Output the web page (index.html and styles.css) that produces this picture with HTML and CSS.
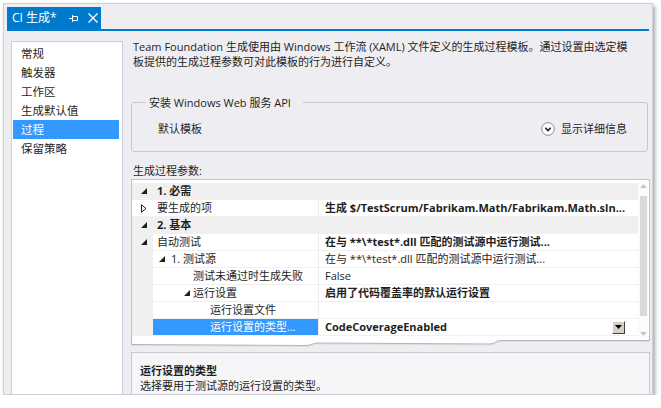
FILE: index.html
```html
<!DOCTYPE html>
<html>
<head>
<meta charset="utf-8">
<link rel="stylesheet" href="styles.css">
</head>
<body>
<div class="window">
  <div class="tabstrip">
    <div class="tab">
      <span class="tab-title">CI 生成*</span>
      <svg class="pin" width="9" height="7" viewBox="0 0 9 7"><path d="M0 3.5H3M3.5 0V7M3.5 1.5H8.5V5.5H3.5" stroke="#fff" fill="none"/></svg>
      <svg class="close" width="10" height="10" viewBox="0 0 10 10"><path d="M0.5 0.5L9.5 9.5M9.5 0.5L0.5 9.5" stroke="#fff" stroke-width="1.3" fill="none"/></svg>
    </div>
  </div>
  <div class="tabline"></div>
  <div class="main">
    <nav class="nav">
      <div class="nav-item">常规</div>
      <div class="nav-item">触发器</div>
      <div class="nav-item">工作区</div>
      <div class="nav-item">生成默认值</div>
      <div class="nav-item selected">过程</div>
      <div class="nav-item">保留策略</div>
    </nav>
    <section class="content">
      <p class="intro">Team Foundation 生成使用由 Windows 工作流 (XAML) 文件定义的生成过程模板。通过设置由选定模<br>板提供的生成过程参数可对此模板的行为进行自定义。</p>
      <fieldset class="group">
        <legend class="group-legend">安装 Windows Web 服务 API</legend>
        <div class="group-row">
          <span>默认模板</span>
          <span class="details">
            <svg width="14" height="14" viewBox="0 0 14 14"><circle cx="7" cy="7" r="6.3" fill="#fff" stroke="#8a8a8a"/><path d="M4.3 5.8L7 8.5L9.7 5.8" stroke="#1e1e1e" stroke-width="1.6" fill="none"/></svg>
            <span>显示详细信息</span>
          </span>
        </div>
      </fieldset>
      <div class="grid-label">生成过程参数:</div>
      <div class="grid">
        <div class="grid-body">
          <div class="row cat">
            <div class="gut"><svg class="exp" width="6" height="6" viewBox="0 0 6 6"><path d="M6 0V6H0Z" fill="#1e1e1e"/></svg></div>
            <div class="name l0 b">1. 必需</div>
            <div class="val"></div>
          </div>
          <div class="row plain">
            <div class="gut"><svg class="col" width="6" height="9" viewBox="0 0 6 9"><path d="M0.5 0.8L5 4.5L0.5 8.2Z" fill="none" stroke="#1e1e1e"/></svg></div>
            <div class="name l0">要生成的项</div>
            <div class="val b">生成 $/TestScrum/Fabrikam.Math/Fabrikam.Math.sln...</div>
          </div>
          <div class="row cat">
            <div class="gut"><svg class="exp" width="6" height="6" viewBox="0 0 6 6"><path d="M6 0V6H0Z" fill="#1e1e1e"/></svg></div>
            <div class="name l0 b">2. 基本</div>
            <div class="val"></div>
          </div>
          <div class="row">
            <div class="gut"><svg class="exp" width="6" height="6" viewBox="0 0 6 6"><path d="M6 0V6H0Z" fill="#1e1e1e"/></svg></div>
            <div class="name l0">自动测试</div>
            <div class="val b">在与 **\*test*.dll 匹配的测试源中运行测试...</div>
          </div>
          <div class="row">
            <div class="gut"></div>
            <div class="name l1"><svg class="exp" width="6" height="6" viewBox="0 0 6 6"><path d="M6 0V6H0Z" fill="#1e1e1e"/></svg><span>1. 测试源</span></div>
            <div class="val">在与 **\*test*.dll 匹配的测试源中运行测试...</div>
          </div>
          <div class="row">
            <div class="gut"></div>
            <div class="name l2t">测试未通过时生成失败</div>
            <div class="val">False</div>
          </div>
          <div class="row">
            <div class="gut"></div>
            <div class="name l2"><svg class="exp" width="6" height="6" viewBox="0 0 6 6"><path d="M6 0V6H0Z" fill="#1e1e1e"/></svg><span>运行设置</span></div>
            <div class="val b">启用了代码覆盖率的默认运行设置</div>
          </div>
          <div class="row">
            <div class="gut"></div>
            <div class="name l3">运行设置文件</div>
            <div class="val"></div>
          </div>
          <div class="row">
            <div class="gut"></div>
            <div class="name l3 sel">运行设置的类型...</div>
            <div class="val b">CodeCoverageEnabled
              <span class="dd"><svg width="7" height="4" viewBox="0 0 7 4"><path d="M0 0H7L3.5 4Z" fill="#000"/></svg></span>
            </div>
          </div>
        </div>
        <div class="scroll">
          <svg class="arrow-up" width="7" height="4" viewBox="0 0 7 4"><path d="M0 4H7L3.5 0Z" fill="#c8c8c8"/></svg>
          <div class="thumb"></div>
          <svg class="arrow-down" width="7" height="4" viewBox="0 0 7 4"><path d="M0 0H7L3.5 4Z" fill="#c8c8c8"/></svg>
        </div>
      </div>
      <svg class="tear" width="519" height="11" viewBox="0 0 519 11">
        <path d="M0 0H519V2.5L370 2.5C365 2.5 364 6 359 6L187 5C182 5 180 7.5 175 7.5L0 6.5Z" fill="#fff"/>
        <path d="M0.5 7.5L175 8.5C180 8.5 182 6 187 6L359 7C364 7 365 3.5 370 3.5L518.5 3.5" fill="none" stroke="#dedee3"/>
        <path d="M0.5 0V6.5L175 7.5C180 7.5 182 5 187 5L359 6C364 6 365 2.5 370 2.5L518.5 2.5V0" fill="none" stroke="#b4b5bb"/>
      </svg>
      <div class="desc">
        <div class="b">运行设置的类型</div>
        <div>选择要用于测试源的运行设置的类型。</div>
      </div>
    </section>
  </div>
</div>
</body>
</html>
```

FILE: styles.css
```css
* { box-sizing: border-box; }
html, body { margin: 0; padding: 0; background: #ffffff; }
body {
  font-family: "Open Sans", "Noto Sans CJK SC", sans-serif;
  font-size: 11px;
  line-height: 15px;
  color: #1e1e1e;
}
.b { font-weight: bold; }

.window {
  margin: 3px 0 0 3px;
  width: 650px;
  height: 392px;
  border: 1px solid #cfd0d6;
  background: #eeeef2;
  box-shadow: 2px 3px 4px rgba(0, 0, 0, 0.35);
  overflow: hidden;
  display: flex;
  flex-direction: column;
}

.tabstrip { padding: 3px 0 0 3px; height: 25px; display: flex; flex: none; }
.tab {
  background: #007acc;
  color: #fff;
  width: 94px;
  height: 22px;
  display: flex;
  align-items: center;
  padding-left: 5px;
}
.tab-title { font-size: 12px; line-height: 22px; white-space: nowrap; width: 57px; flex: none; }
.pin { flex: none; }
.close { margin-left: 10px; flex: none; }
.tabline { height: 2px; background: #007acc; margin: 0 3px; flex: none; }

.main { flex: 1; display: flex; min-height: 0; }

.nav {
  margin: 10px 0 0 7px;
  width: 112px;
  flex: none;
  background: #fff;
  border: 1px solid #cccedb;
  border-bottom: none;
  padding-top: 2px;
}
.nav-item {
  height: 19px;
  line-height: 19px;
  margin: 0 3px 0 1px;
  padding-left: 8px;
  font-size: 11.5px;
}
.nav-item.selected { background: #3399ff; color: #fff; }

.content { margin-left: 8px; width: 519px; flex: none; padding-top: 8px; }

.intro { margin: 0; padding: 0 2px; white-space: nowrap; }

.group {
  margin: 26px 2px 0 0;
  border: 1px solid #c7c8ce;
  border-radius: 3px;
  padding: 11px 20px 15px 26px;
  min-width: 0;
}
.group-legend {
  margin-left: -12px;
  padding: 0 12px 0 3px;
  line-height: 15px;
}
.group-row {
  display: flex;
  justify-content: space-between;
  align-items: center;
  height: 15px;
}
.details { display: flex; align-items: center; gap: 6px; }
.details svg { display: block; }

.grid-label { margin-top: 11px; padding-left: 2px; }

.grid {
  margin-top: 1px;
  border: 1px solid #c2c3c9;
  border-bottom: none;
  background: #fff;
  display: flex;
}
.grid-body { flex: 1; padding: 3px 0 2px 0; }

.row {
  display: grid;
  grid-template-columns: 21px 166px 1fr;
  height: 17px;
  line-height: 16px;
  border-bottom: 1px solid #f0f0f0;
}
.row .gut { background: #f0f0f0; display: flex; align-items: center; padding-left: 9px; }
.row.cat { background: #f0f0f0; }
.row.plain .gut { background: #fff; }
.row .gut svg { display: block; }

.name {
  white-space: nowrap;
  overflow: hidden;
  border-right: 1px solid #ececec;
  display: flex;
  align-items: center;
}
.row.cat .name { border-right: none; }
.name svg { display: block; flex: none; }
.name.l0 { padding-left: 4px; }
.name.l1 { padding-left: 6px; }
.name.l1 svg { margin-right: 6px; }
.name.l2t { padding-left: 40px; }
.name.l2 { padding-left: 31px; }
.name.l2 svg { margin-right: 3px; }
.name.l3 { padding-left: 57px; }
.name.sel { background: #3399ff; color: #fff; }

.val {
  white-space: nowrap;
  overflow: hidden;
  padding-left: 6px;
  display: flex;
  align-items: center;
}
.dd {
  margin-left: auto;
  margin-right: 13px;
  width: 13px;
  height: 13px;
  border: 1px solid;
  border-color: #fff #404040 #404040 #fff;
  background: #d4d0c8;
  display: flex;
  align-items: center;
  justify-content: center;
}
.dd svg { display: block; }

.scroll {
  width: 11px;
  flex: none;
  display: flex;
  flex-direction: column;
  align-items: center;
  background: #fbfbfb;
}
.scroll svg { display: block; }
.arrow-up { margin-top: 4px; }
.thumb { width: 7px; height: 120px; margin-top: 8px; background: #dadada; }
.arrow-down { margin-top: 16px; }

.tear { display: block; }

.desc {
  margin-top: 3px;
  border: 1px solid #c9cad0;
  background: #f6f6f8;
  padding: 10px 8px 30px 8px;
}
```
